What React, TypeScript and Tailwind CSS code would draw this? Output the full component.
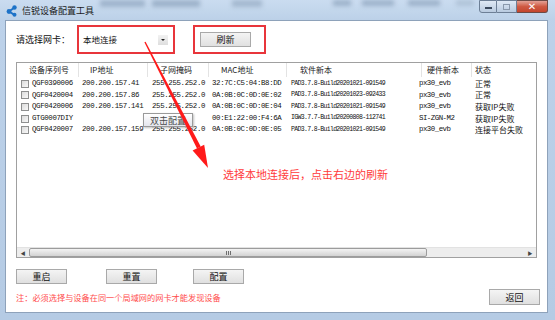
import React from "react";

const rows = [
  { sn: "QGF0390006", ip: "200.200.157.41", mask: "255.255.252.0", mac: "32:7C:C5:04:B8:DD", sw: "PAD3.7.8-Build20201021-091549", hw: "px30_evb", st: "正常" },
  { sn: "QGF0420004", ip: "200.200.157.86", mask: "255.255.252.0", mac: "0A:0B:0C:0D:0E:02", sw: "PAD3.7.8-Build20201023-092433", hw: "px30_evb", st: "正常" },
  { sn: "QGF0420006", ip: "200.200.157.141", mask: "255.255.252.0", mac: "0A:0B:0C:0D:0E:04", sw: "PAD3.7.8-Build20201021-091549", hw: "px30_evb", st: "获取IP失败" },
  { sn: "GTG0007DIY", ip: "", mask: "", mac: "00:E1:22:00:F4:6A", sw: "IGW3.7.7-Build20200808-112741", hw: "SI-ZGN-M2", st: "获取IP失败" },
  { sn: "QGF0420007", ip: "200.200.157.159", mask: "255.255.252.0", mac: "0A:0B:0C:0D:0E:05", sw: "PAD3.7.8-Build20201021-091549", hw: "px30_evb", st: "连接平台失败" },
];

const headers = ["设备序列号", "IP地址", "子网掩码", "MAC地址", "软件新本", "硬件新本", "状态"];

function WinButton({ label, className = "" }: { label: string; className?: string }) {
  return (
    <div
      className={`w-[51px] h-[15px] border border-[#a9a9a9] bg-gradient-to-b from-[#f4f4f4] to-[#e0e0e0] flex items-center justify-center text-[9px] leading-none text-[#111] ${className}`}
    >
      {label}
    </div>
  );
}

function TitleBar() {
  return (
    <div className="h-[20px] relative bg-gradient-to-b from-[#cadcf0] to-[#bcd1e8] flex items-center">
      {/* blurred glass blobs */}
      <div className="absolute top-0 left-[100px] w-[45px] h-[7px] bg-[#9fb4cc] blur-[2px]" />
      <div className="absolute top-0 left-[152px] w-[48px] h-[7px] bg-[#9db2ca] blur-[2px]" />
      <div className="absolute top-0 left-[232px] w-[30px] h-[7px] bg-[#a4b8cf] blur-[2px]" />
      <div className="absolute top-0 left-[333px] w-[18px] h-[6px] bg-[#9db2ca] blur-[2px]" />
      <div className="absolute top-0 left-[362px] w-[32px] h-[6px] bg-[#9db2ca] blur-[2px]" />
      <div className="absolute top-0 left-[408px] w-[32px] h-[6px] bg-[#9db2ca] blur-[2px]" />
      <div className="absolute top-0 left-[456px] w-[18px] h-[6px] bg-[#b0c3d8] blur-[2px]" />

      <svg width="12" height="12" viewBox="0 0 12 12" className="ml-[6px] mt-[1px] relative">
        <circle cx="8.5" cy="2.5" r="2.2" fill="#1e73c8" />
        <circle cx="3" cy="6.5" r="2.4" fill="#1e73c8" />
        <circle cx="8.5" cy="9.8" r="2" fill="#1e73c8" />
        <path d="M3 6.5 L8.5 2.5 M3 6.5 L8.5 9.8" stroke="#1e73c8" strokeWidth="2" />
      </svg>
      <span className="ml-[4px] text-[9px] leading-none text-[#1b1b1b] relative">信锐设备配置工具</span>

      <div className="absolute right-[7px] top-0 flex h-[13px]">
        <div className="w-[18px] h-[13px] border border-[#6d7f96] rounded-bl-[3px] bg-gradient-to-b from-[#dfe9f5] to-[#b9cbe0] flex items-end justify-center pb-[3px]">
          <div className="w-[7px] h-[2px] bg-white border border-[#3b4a5e]" />
        </div>
        <div className="w-[20px] h-[13px] border-y border-r border-[#6d7f96] bg-gradient-to-b from-[#dfe9f5] to-[#b9cbe0] flex items-center justify-center">
          <div className="w-[7px] h-[6px] border border-[#8a99ac]" />
        </div>
        <div className="w-[31px] h-[13px] border-y border-r border-[#6d4a45] rounded-br-[3px] bg-gradient-to-b from-[#e3a196] via-[#cf5a43] to-[#c4452d] flex items-center justify-center text-white text-[10px] font-bold leading-none font-['DejaVu_Sans',sans-serif]">
          ✕
        </div>
      </div>
    </div>
  );
}

function Checkbox() {
  return <div className="w-[8px] h-[8px] border border-[#8e8f8f] bg-gradient-to-br from-[#dcdcdc] to-[#f8f8f8]" />;
}

function ListView() {
  return (
    <div className="w-[521px] h-[196px] border border-[#a0a0a0] flex flex-col relative">
      {/* header */}
      <div className="h-[14px] flex text-[8px] leading-none text-[#222]">
        {headers.map((h, i) => (
          <div
            key={h}
            className={`flex items-center border-r border-[#e3e3e3] ${
              i === 0
                ? "w-[62px] pl-[12px]"
                : i === 1
                ? "w-[69px] pl-[11px]"
                : i === 2
                ? "w-[61px] pl-[12px]"
                : i === 3
                ? "w-[78px] pl-[12px]"
                : i === 4
                ? "w-[135px] pl-[13px]"
                : i === 5
                ? "w-[50px] pl-[5px]"
                : "flex-1 pl-[3px] border-r-0"
            }`}
          >
            {h}
          </div>
        ))}
      </div>

      {/* rows */}
      <div className="flex flex-col pt-[1px] font-['Liberation_Mono','Noto_Sans_CJK_SC',monospace] text-[7.4px] leading-none text-[#111]">
        {rows.map((r) => (
          <div key={r.sn} className="h-[11.6px] flex items-center">
            <div className="w-[65px] flex items-center pl-[4px] gap-[3px]">
              <Checkbox />
              <span className="tracking-[-0.35px]">{r.sn}</span>
            </div>
            <div className="w-[70px] tracking-[-0.35px]">{r.ip}</div>
            <div className="w-[60px] tracking-[-0.35px]">{r.mask}</div>
            <div className="w-[79px] tracking-[-0.35px]">{r.mac}</div>
            <div className="w-[128px] text-[6.5px] tracking-[-0.66px]">{r.sw}</div>
            <div className="w-[56px] tracking-[-0.5px]">{r.hw}</div>
            <div className="flex-1 font-['Noto_Sans_CJK_SC',sans-serif] text-[8px]">{r.st}</div>
          </div>
        ))}
      </div>

      <div className="flex-1" />

      {/* horizontal scrollbar */}
      <div className="h-[10px] bg-[#ededed] border-t border-[#e2e2e2] flex items-center">
        <div className="w-[12px] flex items-center justify-center text-[5px] text-[#444] leading-none">◀</div>
        <div className="w-[398px] h-[9px] rounded-[2px] border border-[#9c9c9c] bg-gradient-to-b from-[#f3f3f3] to-[#d3d3d3] flex items-center justify-center">
          <div className="flex gap-[1px]">
            <div className="w-[1px] h-[4px] bg-[#6f6f6f]" />
            <div className="w-[1px] h-[4px] bg-[#6f6f6f]" />
            <div className="w-[1px] h-[4px] bg-[#6f6f6f]" />
          </div>
        </div>
        <div className="flex-1" />
        <div className="w-[12px] flex items-center justify-center text-[5px] text-[#444] leading-none">▶</div>
      </div>

      {/* tooltip */}
      <div className="absolute left-[126px] top-[50px] w-[50px] h-[14px] border border-[#9a9a9a] bg-gradient-to-b from-[#ffffff] to-[#e5e6ee] shadow-[1px_1px_2px_rgba(0,0,0,0.25)] flex items-center justify-center text-[9px] leading-none text-[#4a4a4a]">
        双击配置
      </div>
    </div>
  );
}

function Arrow() {
  return (
    <svg className="absolute left-0 top-0 pointer-events-none" width="555" height="320" viewBox="0 0 555 320">
      <polygon points="144.4,42.3 145.6,41.7 200.7,146.5 197,148.4" fill="#ff1a1a" />
      <polygon points="192.6,150.5 204.2,144.7 208,168" fill="#ff1a1a" />
    </svg>
  );
}

export default function App() {
  return (
    <div className="w-[555px] h-[320px] relative overflow-hidden bg-gradient-to-b from-[#bdd2ea] to-[#b5cbe4] font-['Noto_Sans_CJK_SC',sans-serif]">
      <TitleBar />
      <div className="ml-[5px] w-[543px] h-[293px] bg-white border border-[#8ea2ba] flex flex-col">
        {/* network card selector */}
        <div className="flex items-center pl-[10px] pt-[4px]">
          <span className="w-[61px] text-[9px] leading-none text-[#111]">请选择网卡：</span>
          <div className="w-[98px] h-[29px] border-2 border-[#e8353b] flex items-center pl-[4px] pr-[5px]">
            <span className="text-[8.5px] leading-none text-[#111] flex-1">本地连接</span>
            <div className="w-[10px] h-[10px] bg-gradient-to-b from-[#f2f2f2] to-[#dedede] flex items-center justify-center">
              <div className="w-0 h-0 border-x-[2px] border-x-transparent border-t-[2px] border-t-[#222]" />
            </div>
          </div>
          <div className="ml-[18px] w-[73px] h-[29px] border-2 border-[#e8353b] pl-[5px] pt-[5px]">
            <WinButton label="刷新" />
          </div>
        </div>

        <div className="pl-[10px] mt-[8px]">
          <ListView />
        </div>

        <div className="flex pl-[10px] mt-[11px]">
          <WinButton label="重启" />
          <WinButton label="重置" className="ml-[39px]" />
          <WinButton label="配置" className="ml-[36px]" />
        </div>

        <div className="flex items-center justify-between pl-[10px] pr-[7px] mt-[5px]">
          <span className="text-[8.2px] leading-none text-[#ff4d4d]">注：必须选择与设备在同一个局域网的网卡才能发现设备</span>
          <WinButton label="返回" className="h-[16px]" />
        </div>

        <div className="absolute left-[223px] top-[169px] text-[11px] leading-none text-[#ff3b3b]">
          选择本地连接后，点击右边的刷新
        </div>
      </div>
      <Arrow />
    </div>
  );
}
